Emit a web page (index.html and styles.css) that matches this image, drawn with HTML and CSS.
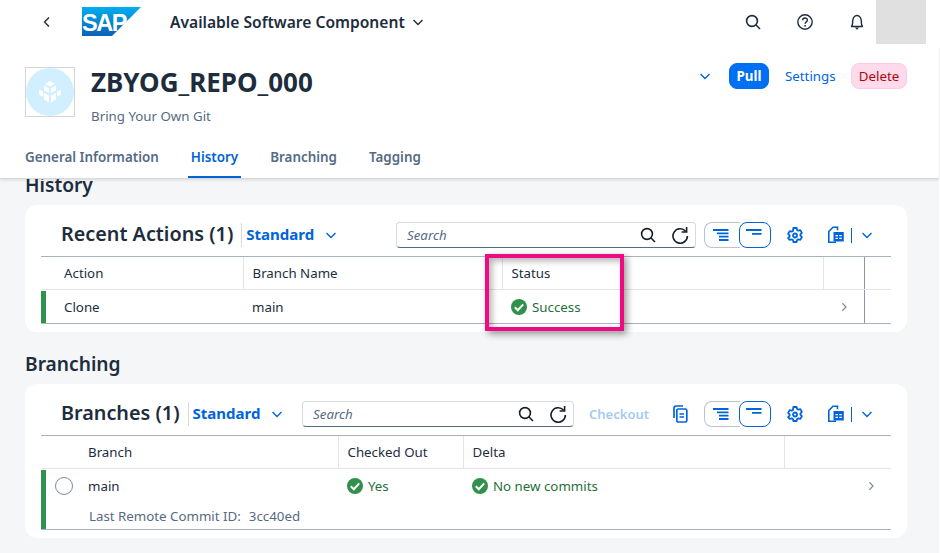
FILE: index.html
```html
<!DOCTYPE html>
<html lang="en">

<head>
	<meta charset="UTF-8">
	<meta name="viewport" content="width=device-width, initial-scale=1.0">
	<title>Available Software Component</title>
	<link rel="stylesheet" href="styles.css">
</head>

<body>
	<svg class="defs" width="0" height="0">
		<symbol id="i-search" viewBox="0 0 16 16"><circle cx="7" cy="7" r="5.4" fill="none" stroke="currentColor" stroke-width="1.6"/><path d="M11 11l4 4" stroke="currentColor" stroke-width="1.6" fill="none"/></symbol>
		<symbol id="i-refresh" viewBox="0 0 18 18"><path d="M14.6 5.2A7.2 7.2 0 1 0 16.4 10" fill="none" stroke="currentColor" stroke-width="1.6"/><path d="M15.6 1v5h-5" fill="none" stroke="currentColor" stroke-width="1.6"/></symbol>
		<symbol id="i-chev" viewBox="0 0 12 12"><path d="M1.5 4l4.5 4.5L10.500 4" fill="none" stroke="currentColor" stroke-width="1.4"/></symbol>
		<symbol id="i-next" viewBox="0 0 12 12"><path d="M4 1.500l4.500 4.500L4 10.500" fill="none" stroke="currentColor" stroke-width="1.4"/></symbol>
		<symbol id="i-ok" viewBox="0 0 16 16"><circle cx="8" cy="8" r="8" fill="#30914c"/><path d="M3.800 8.300l3 2.900 5.400-5.800" fill="none" stroke="#fff" stroke-width="2"/></symbol>
		<symbol id="i-gear" viewBox="0 0 16 16"><path d="M6.400 1h3.200l.5 2 1.200.7 2-.6 1.600 2.800-1.500 1.400v1.400l1.500 1.400-1.600 2.800-2-.6-1.200.7-.5 2H6.400l-.5-2-1.200-.7-2 .6L1.100 11.100l1.500-1.400V8.300L1.100 6.900l1.600-2.800 2 .6 1.200-.7z" fill="none" stroke="currentColor" stroke-width="1.800" stroke-linejoin="round"/><circle cx="8" cy="8.500" r="2" fill="none" stroke="currentColor" stroke-width="1.800"/></symbol>
		<symbol id="i-export" viewBox="0 0 18 18"><path d="M9 16.200H1.800V5.500L6 1.200h4.500v3" fill="none" stroke="currentColor" stroke-width="1.600"/><path d="M6.500 6h10.300v9.500H6.500z" fill="currentColor"/><path d="M8.500 9h2.500v1.300H8.500zM12.300 9h2.500v1.300h-2.500zM8.500 11.800h2.500v1.300H8.500zM12.300 11.800h2.500v1.300h-2.500z" fill="#fff"/></symbol>
		<symbol id="i-copy" viewBox="0 0 16 18"><path d="M2 13V3.500C2 2 2.800 1 4.300 1H11" fill="none" stroke="currentColor" stroke-width="1.700"/><rect x="4.800" y="4" width="10" height="13" rx="1.600" fill="none" stroke="currentColor" stroke-width="1.700"/><path d="M7.500 9h4.600M7.500 12h4.600" stroke="currentColor" stroke-width="1.500"/></symbol>
		<symbol id="i-sort" viewBox="0 0 16 12"><path d="M0 1h15.500M4 4.300h11.500M6 7.600h9.500M6 11h9.500" stroke="currentColor" stroke-width="1.800"/></symbol>
		<symbol id="i-group" viewBox="0 0 16 12"><path d="M0 1h15.500M6 4.800h9.500" stroke="currentColor" stroke-width="1.800"/></symbol>
	</svg>

	<header class="page-head">
		<div class="shellbar">
			<svg class="back" width="12" height="12"><use href="#i-next" transform="matrix(-1 0 0 1 12 0)"/></svg>
			<svg class="logo" viewBox="0 0 59 29" width="59" height="29">
				<defs>
					<linearGradient id="sap-blue" x1="0" y1="0" x2="0" y2="1">
						<stop offset="0" stop-color="#00aeef"/>
						<stop offset="1" stop-color="#0a62b4"/>
					</linearGradient>
				</defs>
				<path d="M0 0h59L30 29H0z" fill="url(#sap-blue)"/>
				<text x="0" y="23.500" class="logo-text">SAP</text>
			</svg>
			<span class="app-title">Available Software Component</span>
			<svg class="app-chev" width="12" height="12"><use href="#i-chev"/></svg>
			<div class="shell-icons">
				<svg width="16" height="16"><use href="#i-search"/></svg>
				<svg width="16" height="16" viewBox="0 0 16 16">
					<circle cx="8" cy="8" r="7.200" fill="none" stroke="currentColor" stroke-width="1.400"/>
					<path d="M5.700 6.200c0-3 4.700-3 4.700-.1 0 1.900-2.300 1.700-2.300 3.700" fill="none" stroke="currentColor" stroke-width="1.400"/>
					<path d="M7.300 11h1.600v1.600H7.300z" fill="currentColor"/>
				</svg>
				<svg width="16" height="16" viewBox="0 0 16 16">
					<path d="M2.500 12.500c1-1 1.200-2 1.200-5.500 0-3 1.900-5.500 4.300-5.500s4.300 2.500 4.300 5.500c0 3.500.2 4.500 1.200 5.500z" fill="none" stroke="currentColor" stroke-width="1.400" stroke-linejoin="round"/>
					<path d="M5.800 13.500h4.400L8 15.800z" fill="currentColor"/>
				</svg>
			</div>
			<div class="user-box"></div>
		</div>

		<div class="object-row">
			<div class="avatar">
				<div class="avatar-circle">
					<svg width="24" height="24" viewBox="0 0 24 24">
						<path d="M12 1l5 2.800L12 6.600 7 3.800zM6 5.500l5 2.800v4.800L6 10.300zM18 5.500l-5 2.800v4.800l5-2.800zM1 9.500l4 2.300v5L1 14.500zM23 9.500l-4 2.300v5l4-2.300zM6 13l5 2.800v6.700L6 19.500zM18 13l-5 2.800v6.700l5-3z" fill="#fff"/>
					</svg>
				</div>
			</div>
			<div class="object-text">
				<h1>ZBYOG_REPO_000</h1>
				<p>Bring Your Own Git</p>
			</div>
			<div class="object-actions">
				<svg width="12" height="12"><use href="#i-chev"/></svg>
				<button class="btn-pull">Pull</button>
				<button class="btn-plain">Settings</button>
				<button class="btn-delete">Delete</button>
			</div>
		</div>

		<nav class="tabs">
			<a>General Information</a>
			<a class="active">History</a>
			<a>Branching</a>
			<a>Tagging</a>
		</nav>
	</header>

	<main>
		<h2 class="section-title first">History</h2>
		<section class="card">
			<div class="toolbar">
				<h3>Recent Actions (1)</h3>
				<div class="variant">
					<span>Standard</span>
					<svg width="12" height="12"><use href="#i-chev"/></svg>
				</div>
				<div class="search search-wide">
					<span>Search</span>
					<svg class="search-go" width="16" height="16"><use href="#i-search"/></svg>
					<svg class="search-reload" width="18" height="18"><use href="#i-refresh"/></svg>
				</div>
				<div class="toggle">
					<div class="toggle-off"><svg width="16" height="12"><use href="#i-sort"/></svg></div>
					<div class="toggle-on"><svg width="16" height="12"><use href="#i-group"/></svg></div>
				</div>
				<div class="tool tool-gear"><svg width="16" height="16"><use href="#i-gear"/></svg></div>
				<div class="tool tool-export"><svg width="18" height="18"><use href="#i-export"/></svg></div>
				<div class="tool-sep"></div>
				<div class="tool-chev"><svg width="12" height="12"><use href="#i-chev"/></svg></div>
			</div>

			<div class="table">
				<div class="row head cols-actions">
					<div class="cell">Action</div>
					<div class="cell">Branch Name</div>
					<div class="cell">Status</div>
					<div class="cell"></div>
				</div>
				<div class="row body cols-actions marked">
					<div class="cell">Clone</div>
					<div class="cell">main</div>
					<div class="cell ok"><svg width="16" height="16"><use href="#i-ok"/></svg>Success</div>
					<div class="cell nav"><svg width="10" height="10"><use href="#i-next"/></svg></div>
				</div>
			</div>

			<div class="highlight"></div>
		</section>

		<h2 class="section-title">Branching</h2>
		<section class="card">
			<div class="toolbar">
				<h3>Branches (1)</h3>
				<div class="variant">
					<span>Standard</span>
					<svg width="12" height="12"><use href="#i-chev"/></svg>
				</div>
				<div class="search search-narrow">
					<span>Search</span>
					<svg class="search-go" width="16" height="16"><use href="#i-search"/></svg>
					<svg class="search-reload" width="18" height="18"><use href="#i-refresh"/></svg>
				</div>
				<span class="checkout">Checkout</span>
				<div class="tool tool-copy"><svg width="16" height="18"><use href="#i-copy"/></svg></div>
				<div class="toggle">
					<div class="toggle-off"><svg width="16" height="12"><use href="#i-sort"/></svg></div>
					<div class="toggle-on"><svg width="16" height="12"><use href="#i-group"/></svg></div>
				</div>
				<div class="tool tool-gear"><svg width="16" height="16"><use href="#i-gear"/></svg></div>
				<div class="tool tool-export"><svg width="18" height="18"><use href="#i-export"/></svg></div>
				<div class="tool-sep"></div>
				<div class="tool-chev"><svg width="12" height="12"><use href="#i-chev"/></svg></div>
			</div>

			<div class="table">
				<div class="row head cols-branches">
					<div class="cell first-col">Branch</div>
					<div class="cell">Checked Out</div>
					<div class="cell">Delta</div>
					<div class="cell"></div>
				</div>
				<div class="row body tall cols-branches marked">
					<div class="cell first-col branch-name"><span class="radio"></span>main</div>
					<div class="cell ok"><svg width="16" height="16"><use href="#i-ok"/></svg>Yes</div>
					<div class="cell ok"><svg width="16" height="16"><use href="#i-ok"/></svg>No new commits</div>
					<div class="cell nav"><svg width="10" height="10"><use href="#i-next"/></svg></div>
					<div class="commit">Last Remote Commit ID:<span>3cc40ed</span></div>
				</div>
			</div>
		</section>
	</main>
</body>

</html>
```

FILE: styles.css
```css
* {
	box-sizing: border-box;
}

html,
body {
	margin: 0;
	height: 553px;
	overflow: hidden;
}

body {
	background-color: #f5f6f7;
	color: #1d2d3e;
	font-family: "Noto Sans", "Open Sans", sans-serif;
	font-size: 13.3px;
}

/* thin edge of the scrolled area, right side of the window */
body::after {
	content: "";
	position: absolute;
	z-index: 3;
	top: 48px;
	right: 0;
	width: 1px;
	height: 505px;
	background: linear-gradient(#f0f0f0 130px, #fff 130px);
}

.defs {
	display: block;
	height: 0;
}

svg {
	display: block;
	flex: none;
}

/* header */
.page-head {
	position: relative;
	z-index: 2;
	height: 179px;
	background: #fff;
	border-bottom: 1px solid #d9d9d9;
	box-shadow: 0 1px 3px rgba(0, 0, 0, 0.12);
}

.shellbar {
	display: flex;
	align-items: center;
	height: 44px;
	padding-right: 14px;
}

.back {
	margin-left: 41px;
	color: #1d2d3e;
}

.logo {
	margin-left: 29px;
	margin-top: -1px;
}

.logo-text {
	font-family: "Liberation Sans", sans-serif;
	font-weight: bold;
	font-size: 23.5px;
	letter-spacing: -1.4px;
	fill: #fff;
}

.app-title {
	margin-left: 29px;
	font-size: 15.6px;
	font-weight: 600;
}

.app-chev {
	margin-left: 7px;
}

.shell-icons {
	display: flex;
	gap: 36px;
	margin-left: auto;
	margin-right: 11px;
}

.user-box {
	width: 50px;
	height: 44px;
	background: #e0e0e0;
}

.object-row {
	display: flex;
	padding: 19px 33px 0 25px;
	height: 93px;
}

.avatar {
	width: 50px;
	height: 50px;
	margin-top: 4px;
	border: 1px solid #d4d4d4;
}

.avatar-circle {
	display: flex;
	align-items: center;
	justify-content: center;
	width: 48px;
	height: 48px;
	border-radius: 50%;
	background: #d1efff;
}

.object-text {
	margin-left: 16px;
}

.object-text h1 {
	margin: 2px 0 0;
	font-size: 26px;
	line-height: 34px;
	font-weight: 700;
}

.object-text p {
	margin: 7px 0 0;
	line-height: 20px;
	color: #556b82;
}

.object-actions {
	display: flex;
	align-items: center;
	height: 26px;
	margin-left: auto;
	color: #0064d9;
}

.object-actions button {
	height: 26px;
	border-radius: 8px;
	font: inherit;
	padding: 0;
}

.object-actions .btn-pull {
	width: 40px;
	margin-left: 18px;
	background: #0070f2;
	border: 1px solid #0070f2;
	color: #fff;
	font-weight: 700;
}

.btn-plain {
	width: 50px;
	margin-left: 16px;
	background: none;
	border: none;
	color: #0064d9;
}

.btn-delete {
	width: 56px;
	margin-left: 16px;
	background: #ffd9ec;
	border: 1px solid #ffc9e3;
	color: #aa0808;
}

.tabs {
	display: flex;
	gap: 26px;
	height: 41px;
	padding-left: 22px;
}

.tabs a {
	padding: 11px 3px 0;
	height: 41px;
	line-height: 19px;
	font-size: 13.4px;
	font-weight: 600;
	color: #556b82;
}

.tabs a.active {
	color: #0064d9;
	border-bottom: 2px solid #0064d9;
}

/* content */
main {
	padding: 0 33px 0 25px;
}

.section-title {
	margin: 22px 0 10px;
	font-size: 19.2px;
	line-height: 20px;
	font-weight: 600;
}

.section-title.first {
	margin-top: -4px;
}

.card {
	position: relative;
	padding: 17px 16px 8px;
	background: #fff;
	border-radius: 12px;
}

.toolbar {
	display: flex;
	align-items: center;
	height: 26px;
	margin-bottom: 8px;
	padding: 0 16px 0 20px;
}

.toolbar h3 {
	margin: -3px 0 0;
	font-size: 19.8px;
	font-weight: 600;
	white-space: nowrap;
}

.variant {
	display: flex;
	align-items: center;
	height: 24px;
	margin-left: 8px;
	padding-left: 4px;
	border-left: 1px solid #d9d9d9;
	color: #0064d9;
	font-size: 15px;
	font-weight: 700;
}

.variant span {
	margin-top: -2px;
}

.variant svg {
	margin-left: 11px;
}

.search {
	display: flex;
	align-items: center;
	height: 26px;
	margin-left: auto;
	padding-left: 10px;
	border: 1px solid #d5dadd;
	border-bottom-color: #556b82;
	border-radius: 4px;
	color: #556b82;
	font-style: italic;
}

.search span {
	margin-top: -1px;
}

.search-wide {
	width: 300px;
}

.search-narrow {
	width: 272px;
}

.search-go {
	margin-left: auto;
	color: #131e29;
}

.search-reload {
	margin: 0 6px 0 15px;
	color: #131e29;
}

.checkout {
	margin-left: 15px;
	color: #a6c9f3;
	font-size: 13px;
	font-weight: 600;
}

.tool {
	display: flex;
	align-items: center;
	justify-content: center;
	width: 24px;
	height: 26px;
	color: #0064d9;
}

.tool-copy {
	margin-left: 19px;
}

.toggle {
	display: flex;
	margin-left: 8px;
	height: 26px;
	color: #0064d9;
}

.tool-copy + .toggle {
	margin-left: 12px;
}

.toggle-off {
	display: flex;
	align-items: center;
	justify-content: center;
	width: 36px;
	border: 1px solid #bcc3ca;
	border-right: none;
	border-radius: 8px 0 0 8px;
	padding-right: 4px;
}

.toggle-on {
	display: flex;
	align-items: flex-start;
	justify-content: center;
	width: 32px;
	padding: 6px 2px 0 0;
	margin-left: -1px;
	background: #fff;
	border: 1px solid #0064d9;
	border-radius: 8px;
}

.tool-gear {
	margin-left: 12px;
}

.tool-export {
	margin-left: 17px;
}

.tool-sep {
	width: 1px;
	height: 15px;
	margin-left: 3px;
	background: #0064d9;
}

.tool-chev {
	display: flex;
	justify-content: center;
	width: 16px;
	margin-left: 7px;
	color: #0064d9;
}

/* tables */
.table {
	position: relative;
	border-top: 1px solid #a8b2bd;
}

.row {
	display: grid;
}

.cols-actions {
	grid-template-columns: 202px 259px 321px 42px 26px;
}

.cols-branches {
	grid-template-columns: 297px 125px 321px 107px;
}

.row.head {
	height: 33px;
	border-bottom: 1px solid #e5e5e5;
}

.row.head .cell {
	line-height: 32px;
	padding-left: 8.500px;
	border-left: 1px solid #e5e5e5;
	color: #1d2d3e;
}

.row.head .cell:first-child {
	padding-left: 23px;
	border-left: none;
}

.row.head .cell.first-col {
	padding-left: 47px;
}

.row.body {
	position: relative;
	height: 34px;
	border-bottom: 1px solid #a8b2bd;
}

.row.body.tall {
	height: 61px;
}

.row.body .cell {
	display: flex;
	align-items: center;
	height: 33px;
	padding-left: 9px;
	color: #1d2d3e;
}

.row.body .cell:first-child {
	padding-left: 23px;
}

.row.body .cell.first-col {
	padding-left: 47px;
}

.row.marked::before {
	content: "";
	position: absolute;
	left: 0;
	top: 1px;
	bottom: 0;
	width: 5px;
	background: #30914c;
}

.cols-actions .cell:nth-child(4) {
	border-right: 1px solid #8e979f;
}

.row.body .cell.ok {
	gap: 5px;
	color: #256f3a;
}

.row.body .cell.nav {
	justify-content: flex-end;
	color: #7b8b9c;
	padding-right: 15px;
}

.radio {
	position: absolute;
	left: 14px;
	top: 8px;
	width: 18px;
	height: 18px;
	border: 1px solid #7b8b9c;
	border-radius: 50%;
}

.commit {
	grid-column: 1 / -1;
	padding: 1px 0 0 48px;
	line-height: 18px;
	color: #556b82;
}

.commit span {
	margin-left: 8px;
}

.highlight {
	position: absolute;
	left: 460px;
	top: 49px;
	width: 139px;
	height: 77px;
	border: 4px solid #ee0a82;
	box-shadow: 3px 3px 7px rgba(0, 0, 0, 0.4), inset 3px 3px 6px rgba(0, 0, 0, 0.3);
}
```
